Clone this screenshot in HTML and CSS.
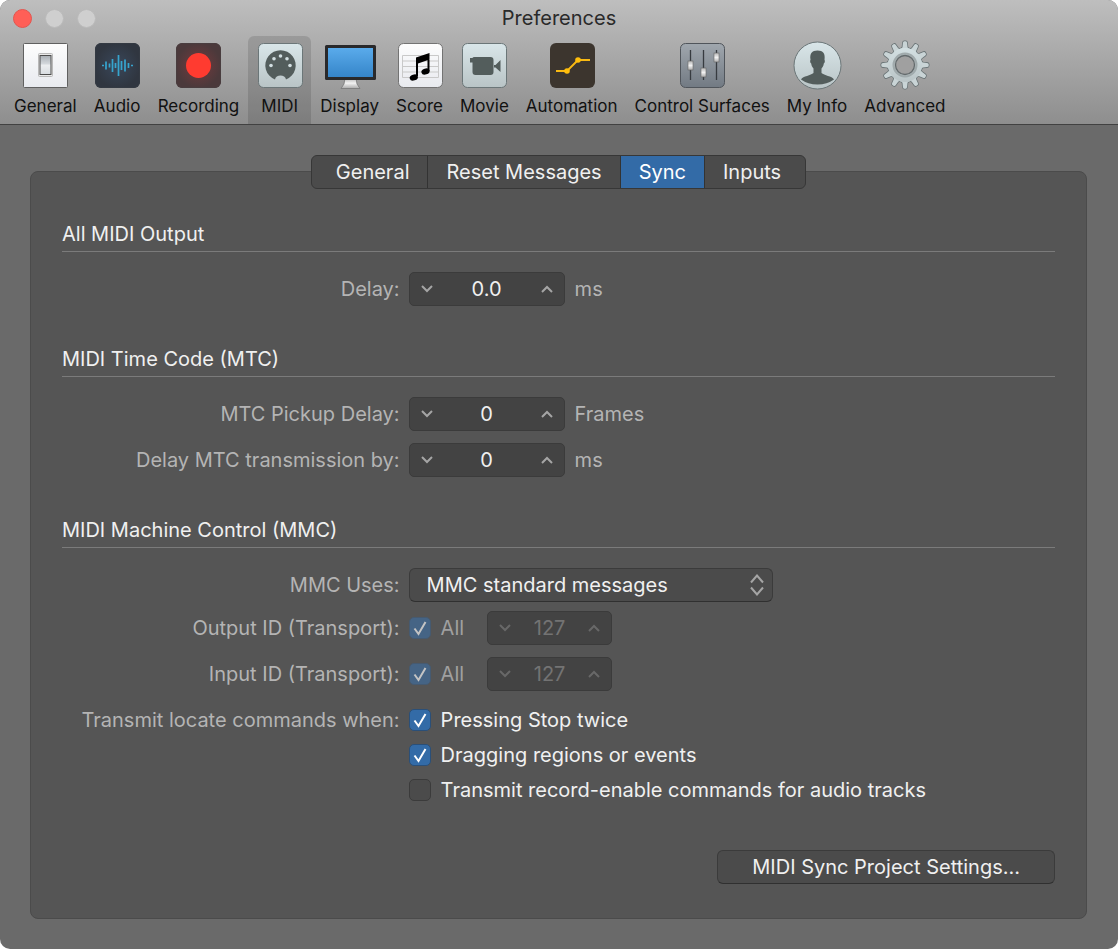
FILE: index.html
```html
<!DOCTYPE html>
<html lang="en">
<head>
<meta charset="utf-8">
<meta name="viewport" content="width=device-width, initial-scale=1">
<title>Preferences</title>
<link rel="stylesheet" href="styles.css">
</head>
<body>
<div class="window">

<header class="top">
  <div class="titlebar">
    <div class="lights">
      <button class="light close" aria-label="Close"></button>
      <button class="light" aria-label="Minimize"></button>
      <button class="light" aria-label="Zoom"></button>
    </div>
    <h1>Preferences</h1>
  </div>

  <nav class="toolbar">
    <button class="tool">
      <svg width="50" height="50" viewBox="0 0 50 50">
        <defs>
          <linearGradient id="white" x1="0" y1="0" x2="0" y2="1"><stop offset="0" stop-color="#fdfdfd"/><stop offset="1" stop-color="#e8eaef"/></linearGradient>
          <linearGradient id="pale" x1="0" y1="0" x2="0" y2="1"><stop offset="0" stop-color="#d9e6e9"/><stop offset="1" stop-color="#b9c4c6"/></linearGradient>
          <linearGradient id="gearfill" gradientUnits="userSpaceOnUse" x1="0" y1="0" x2="0" y2="50"><stop offset="0" stop-color="#d9e6e9"/><stop offset="1" stop-color="#b4bec0"/></linearGradient>
          <linearGradient id="sky" x1="0" y1="0" x2="0" y2="1"><stop offset="0" stop-color="#5aabeb"/><stop offset="1" stop-color="#3585c9"/></linearGradient>
          <linearGradient id="slate" x1="0" y1="0" x2="0" y2="1"><stop offset="0" stop-color="#a0a7ae"/><stop offset="1" stop-color="#727a83"/></linearGradient>
          <linearGradient id="metal" x1="0" y1="0" x2="0" y2="1"><stop offset="0" stop-color="#b5b5b5"/><stop offset=".5" stop-color="#f2f2f2"/><stop offset="1" stop-color="#aaa"/></linearGradient>
          <linearGradient id="rocker" x1="0" y1="0" x2="0" y2="1"><stop offset="0" stop-color="#a9afb5"/><stop offset=".45" stop-color="#d5d9dd"/><stop offset=".5" stop-color="#eceef0"/><stop offset="1" stop-color="#d8dce0"/></linearGradient>
          <radialGradient id="navy"><stop offset="0" stop-color="#39475a"/><stop offset="1" stop-color="#303640"/></radialGradient>
          <radialGradient id="maroon"><stop offset="0" stop-color="#743a3d"/><stop offset="1" stop-color="#4b393b"/></radialGradient>
        </defs>
        <rect x="3.500" y="3.500" width="44" height="44" rx="1" fill="url(#white)" stroke="#606060"/>
        <rect x="18.500" y="13.500" width="14" height="23" rx="1" fill="#e9e9e9" stroke="#b9b9b9"/>
        <rect x="20" y="15.500" width="11" height="19" fill="url(#rocker)" stroke="#4c4c4c"/>
      </svg>
      <span>General</span>
    </button>
    <button class="tool">
      <svg width="50" height="50" viewBox="0 0 50 50">
        <rect x="3" y="3" width="45" height="45" rx="6" fill="url(#navy)"/>
        <rect x="3.500" y="3.500" width="44" height="44" rx="6" fill="none" stroke="#343a43"/>
        <path d="M10 25.500h2M39 25.500h2M14 21.500v8M17.500 23.500v4M20.500 19v13M23.500 23v5M26.500 15v21M29.500 21v9M33 19.500v12M36.500 23v5" fill="none" stroke="#36a5cf" stroke-width="1.700"/>
      </svg>
      <span>Audio</span>
    </button>
    <button class="tool">
      <svg width="50" height="50" viewBox="0 0 50 50">
        <rect x="3" y="3" width="45" height="45" rx="6" fill="url(#maroon)"/>
        <rect x="3.500" y="3.500" width="44" height="44" rx="6" fill="none" stroke="#493d3f"/>
        <circle cx="25.500" cy="25.500" r="12.500" fill="#ff3b30"/>
      </svg>
      <span>Recording</span>
    </button>
    <button class="tool selected">
      <svg width="50" height="50" viewBox="0 0 50 50">
        <rect x="3.500" y="3.500" width="44" height="44" rx="5" fill="url(#pale)" stroke="#6b7678"/>
        <path d="M20 39.500A15.200 15.200 0 1 1 31 39.500C30.500 34 20.500 34 20 39.500z" fill="#535d5c"/>
        <g fill="#d3dfe2"><circle cx="16" cy="25.500" r="1.800"/><circle cx="19" cy="18.800" r="1.800"/><circle cx="25.500" cy="16" r="1.800"/><circle cx="32" cy="18.800" r="1.800"/><circle cx="35" cy="25.500" r="1.800"/></g>
      </svg>
      <span>MIDI</span>
    </button>
    <button class="tool">
      <svg width="54" height="50" viewBox="0 0 54 50">
        <path d="M22 38h11l1 6 3 4.500H18l3-4.500z" fill="url(#metal)" stroke="#777" stroke-width=".8"/>
        <rect x="2" y="5" width="51" height="35" rx="1.500" fill="#29292b"/>
        <rect x="5" y="8" width="45" height="29" fill="url(#sky)"/>
      </svg>
      <span>Display</span>
    </button>
    <button class="tool">
      <svg width="50" height="50" viewBox="0 0 50 50">
        <rect x="3.500" y="3.500" width="44" height="44" rx="5" fill="url(#white)" stroke="#737373"/>
        <path d="M7.500 15.500h36M7.500 21h36M7.500 26.500h36M7.500 32h36M7.500 37.500h36M7.500 15.500v22M43.500 15.500v22" fill="none" stroke="#c9c9c9"/>
        <path d="M21 17.500L34.500 13v6.500L23 23.500V36h-2zM32.500 15h2v16h-2z"/>
        <ellipse cx="18.800" cy="37.500" rx="4.200" ry="3" transform="rotate(-18 18.800 37.500)"/>
        <ellipse cx="30.500" cy="31.500" rx="4.200" ry="3" transform="rotate(-18 30.500 31.500)"/>
      </svg>
      <span>Score</span>
    </button>
    <button class="tool">
      <svg width="50" height="50" viewBox="0 0 50 50">
        <rect x="3.500" y="3.500" width="44" height="44" rx="5" fill="url(#pale)" stroke="#6b7678"/>
        <path d="M11 18h2.500q0-1 2-1h16q3 0 3 3v12q0 3-3 3h-15q-3 0-3-3V22.500H11zM35 25h1.500l5-5v12l-5-4.500H35z" fill="#535d5c"/>
      </svg>
      <span>Movie</span>
    </button>
    <button class="tool">
      <svg width="50" height="50" viewBox="0 0 50 50">
        <rect x="3" y="3" width="45" height="45" rx="6" fill="#3c352e"/>
        <path d="M9 31h11L31 20h12" fill="none" stroke="#f8b913" stroke-width="1.800"/>
        <circle cx="20" cy="31" r="2.800" fill="#ffbe0b"/><circle cx="31" cy="20" r="2.800" fill="#ffbe0b"/>
      </svg>
      <span>Automation</span>
    </button>
    <button class="tool">
      <svg width="50" height="50" viewBox="0 0 50 50">
        <rect x="3.500" y="3.500" width="44" height="44" rx="5" fill="url(#slate)" stroke="#50555b"/>
        <path d="M13.500 10v30M26.500 10v30M39.500 10v30" fill="none" stroke="#373b40" stroke-width="1.300"/>
        <g fill="url(#metal)" stroke="#666" stroke-width=".6"><rect x="11" y="21" width="5" height="9"/><rect x="24" y="28" width="5" height="9"/><rect x="37" y="13" width="5" height="9"/></g>
      </svg>
      <span>Control Surfaces</span>
    </button>
    <button class="tool">
      <svg width="50" height="50" viewBox="0 0 50 50">
        <circle cx="25.500" cy="25.500" r="23.500" fill="url(#pale)" stroke="#6b7678"/>
        <path d="M9 39.500c2-3.500 10-4 12.500-6.500v-4.500c-1.500-1.500-2-3-2.300-5-1.300-.5-1.200-3-.7-3.800C17.500 13.500 20 10.500 25.500 10.500s8 3 7 9.200c.5.800.6 3.300-.7 3.800-.3 2-.8 3.500-2.300 5V33c2.500 2.500 10.500 3 12.500 6.500Q35 44.500 25.500 44.500T9 39.500z" fill="#535d5c"/>
      </svg>
      <span>My Info</span>
    </button>
    <button class="tool">
      <svg width="50" height="50" viewBox="0 0 50 50">
        <defs>
          <g id="gear">
            <path id="teeth" d="M21 10l1.500-3 .4-4q.2-1.700 1.300-1.700h1.600q1.100 0 1.300 1.700l.4 4L29 10zM21 40l1.500 3 .4 4q.2 1.700 1.300 1.700h1.600q1.100 0 1.300-1.700l.4-4L29 40z"/>
            <use href="#teeth" transform="rotate(30 25 25)"/>
            <use href="#teeth" transform="rotate(60 25 25)"/>
            <use href="#teeth" transform="rotate(90 25 25)"/>
            <use href="#teeth" transform="rotate(120 25 25)"/>
            <use href="#teeth" transform="rotate(150 25 25)"/>
            <circle cx="25" cy="25" r="17"/>
          </g>
        </defs>
        <use href="#gear" fill="#697375" stroke="#697375" stroke-width="1.600"/>
        <use href="#gear" fill="#c9d4d6"/>
        <circle cx="25" cy="25" r="17" fill="url(#gearfill)"/>
        <circle cx="25" cy="25" r="11.500" fill="#b4bec0" stroke="#a0aaac" stroke-width="2"/>
        <circle cx="25" cy="25" r="9.500" fill="#a0a0a0" stroke="#646b6d" stroke-width="1.300"/>
      </svg>
      <span>Advanced</span>
    </button>
  </nav>
</header>

<main>
  <div class="tabs">
    <button>General</button>
    <button>Reset Messages</button>
    <button class="active">Sync</button>
    <button>Inputs</button>
  </div>

  <form class="panel">
    <section>
      <h2>All MIDI Output</h2>
      <div class="row">
        <label class="name" for="delay">Delay:</label>
        <div class="stepper">
          <button type="button" aria-label="Decrease"><svg width="12" height="8" viewBox="0 0 12 8"><path d="M1 1l5 5 5-5"/></svg></button>
          <input type="text" id="delay" value="0.0">
          <button type="button" aria-label="Increase"><svg width="12" height="8" viewBox="0 0 12 8"><path d="M1 7l5-5 5 5"/></svg></button>
        </div>
        <span class="unit">ms</span>
      </div>
    </section>

    <section>
      <h2>MIDI Time Code (MTC)</h2>
      <div class="row">
        <label class="name" for="pickup">MTC Pickup Delay:</label>
        <div class="stepper">
          <button type="button" aria-label="Decrease"><svg width="12" height="8" viewBox="0 0 12 8"><path d="M1 1l5 5 5-5"/></svg></button>
          <input type="text" id="pickup" value="0">
          <button type="button" aria-label="Increase"><svg width="12" height="8" viewBox="0 0 12 8"><path d="M1 7l5-5 5 5"/></svg></button>
        </div>
        <span class="unit">Frames</span>
      </div>
      <div class="row">
        <label class="name" for="transmission">Delay MTC transmission by:</label>
        <div class="stepper">
          <button type="button" aria-label="Decrease"><svg width="12" height="8" viewBox="0 0 12 8"><path d="M1 1l5 5 5-5"/></svg></button>
          <input type="text" id="transmission" value="0">
          <button type="button" aria-label="Increase"><svg width="12" height="8" viewBox="0 0 12 8"><path d="M1 7l5-5 5 5"/></svg></button>
        </div>
        <span class="unit">ms</span>
      </div>
    </section>

    <section class="mmc">
      <h2>MIDI Machine Control (MMC)</h2>
      <div class="row">
        <label class="name" for="mmc">MMC Uses:</label>
        <div class="popup">
          <select id="mmc"><option>MMC standard messages</option></select>
          <svg width="14" height="22" viewBox="0 0 14 22"><path d="M1 8.500l6-7 6 7M1 13.500l6 7 6-7"/></svg>
        </div>
      </div>
      <div class="row">
        <label class="name" for="outid">Output ID (Transport):</label>
        <label class="check off"><input type="checkbox" checked disabled><svg width="14" height="16" viewBox="0 0 14 16"><path d="M1.500 8.500l4 5.500 7-12"/></svg>All</label>
        <div class="stepper small">
          <button type="button" disabled aria-label="Decrease"><svg width="12" height="8" viewBox="0 0 12 8"><path d="M1 1l5 5 5-5"/></svg></button>
          <input type="text" id="outid" value="127" disabled>
          <button type="button" disabled aria-label="Increase"><svg width="12" height="8" viewBox="0 0 12 8"><path d="M1 7l5-5 5 5"/></svg></button>
        </div>
      </div>
      <div class="row">
        <label class="name" for="inid">Input ID (Transport):</label>
        <label class="check off"><input type="checkbox" checked disabled><svg width="14" height="16" viewBox="0 0 14 16"><path d="M1.500 8.500l4 5.500 7-12"/></svg>All</label>
        <div class="stepper small">
          <button type="button" disabled aria-label="Decrease"><svg width="12" height="8" viewBox="0 0 12 8"><path d="M1 1l5 5 5-5"/></svg></button>
          <input type="text" id="inid" value="127" disabled>
          <button type="button" disabled aria-label="Increase"><svg width="12" height="8" viewBox="0 0 12 8"><path d="M1 7l5-5 5 5"/></svg></button>
        </div>
      </div>
      <div class="row top-row">
        <span class="name">Transmit locate commands when:</span>
        <div class="checks">
          <label class="check"><input type="checkbox" checked><svg width="14" height="16" viewBox="0 0 14 16"><path d="M1.500 8.500l4 5.500 7-12"/></svg>Pressing Stop twice</label>
          <label class="check"><input type="checkbox" checked><svg width="14" height="16" viewBox="0 0 14 16"><path d="M1.500 8.500l4 5.500 7-12"/></svg>Dragging regions or events</label>
          <label class="check"><input type="checkbox"><svg width="14" height="16" viewBox="0 0 14 16"><path d="M1.500 8.500l4 5.500 7-12"/></svg>Transmit record-enable commands for audio tracks</label>
        </div>
      </div>
    </section>

    <div class="footer">
      <button type="button" class="push">MIDI Sync Project Settings…</button>
    </div>
  </form>
</main>

</div>
</body>
</html>
```
FILE: styles.css
```css
* {
  box-sizing: border-box;
}

body {
  margin: 0;
  padding: 0 2px 2px 0;
  background: #fff;
  font-family: Inter, "Liberation Sans", sans-serif;
  font-size: 20px;
  line-height: 24px;
  color: #f0f0f0;
}

button, input, select {
  font: inherit;
  color: inherit;
  margin: 0;
  padding: 0;
  border: 0;
  background: none;
}

.window {
  background: #6a6a6a;
  border-radius: 10px;
  overflow: hidden;
}

/* title bar and toolbar */

.top {
  background: linear-gradient(#bebebe, #8e8e8e);
  border-bottom: 1px solid #414141;
  color: #111;
}

.titlebar {
  display: grid;
  grid-template-columns: 1fr auto 1fr;
  align-items: center;
  height: 36px;
  padding: 0 13px;
}

.lights {
  display: flex;
  gap: 13px;
}

.light {
  width: 19px;
  height: 19px;
  border-radius: 50%;
  background: #cfcfcf;
  border: 1px solid #bababa;
}

.light.close {
  background: #ff5f57;
  border-color: #e2554f;
}

h1 {
  margin: 0;
  font-size: 20px;
  font-weight: 400;
  color: #2a2a2a;
}

.toolbar {
  display: flex;
  gap: 1px;
  padding-left: 6px;
}

.tool {
  display: flex;
  flex-direction: column;
  align-items: center;
  min-width: 63px;
  height: 88px;
  padding: 4px 8px 0;
  border-radius: 6px 6px 0 0;
  font-size: 17px;
  line-height: 20px;
  white-space: nowrap;
}

.tool svg {
  margin: 0 -3px 6px;
}

.tool.selected {
  background: rgba(0, 0, 0, .12);
}

/* tabs */

main {
  padding: 30px 31px 30px 30px;
}

.tabs {
  position: relative;
  display: flex;
  width: max-content;
  margin: 0 auto -18px;
  border: 1px solid #373737;
  border-radius: 6px;
  overflow: hidden;
  background: #4b4b4b;
}

.tabs button {
  height: 32px;
  padding: 0 18px;
  border-left: 1px solid #333;
}

.tabs button:first-child {
  border-left: 0;
  padding-left: 24px;
}

.tabs button:last-child {
  padding-right: 24px;
}

.tabs .active {
  background: #336ba7;
  color: #fff;
}

.panel {
  padding: 50px 31px 34px;
  background: #555;
  border: 1px solid #4b4b4b;
  border-radius: 8px;
}

section {
  margin-bottom: 40px;
}

h2 {
  margin: 0 0 20px;
  padding-bottom: 5px;
  border-bottom: 1px solid #7b7b7b;
  font-size: 20px;
  font-weight: 400;
}

.row {
  display: flex;
  align-items: center;
  margin-bottom: 12px;
}

.row.top-row {
  align-items: flex-start;
  padding-top: 5px;
}

section + section {
  margin-top: 41px;
}

.mmc {
  margin-bottom: 48px;
}

.mmc h2 + .row {
  margin-bottom: 9px;
}

.name {
  width: 34%;
  margin-right: 9px;
  text-align: right;
  color: #b4b4b4;
}

.unit {
  margin-left: 10px;
  color: #b4b4b4;
}

/* controls */

.stepper {
  display: flex;
  width: 156px;
  height: 34px;
  background: #434343;
  border: 1px solid #3b3b3b;
  border-radius: 5px;
}

.stepper input {
  flex: 1;
  min-width: 0;
  text-align: center;
}

.stepper button {
  width: 34px;
}

.stepper svg {
  display: block;
  margin: 0 auto;
}

.stepper svg, .popup svg, .check svg {
  fill: none;
  stroke: #a5a5a5;
  stroke-width: 2;
}

.stepper.small {
  width: 125px;
  margin-left: 23px;
  color: #737373;
}

.stepper.small svg {
  stroke: #686868;
}

.popup {
  position: relative;
  width: 364px;
}

.popup select {
  display: block;
  appearance: none;
  width: 100%;
  height: 34px;
  padding: 0 17px;
  background: #4b4b4b;
  border: 1px solid #3b3b3b;
  border-bottom-color: #303030;
  border-radius: 6px;
}

.popup svg {
  position: absolute;
  right: 9px;
  top: 6px;
  pointer-events: none;
}

.check {
  position: relative;
  display: flex;
  align-items: center;
  gap: 10px;
}

.check input {
  appearance: none;
  width: 22px;
  height: 22px;
  background: #4b4b4b;
  border: 1px solid #3b3b3b;
  border-radius: 5px;
}

.check input:checked {
  background: #336ba7;
  border-color: #2a4f78;
}

/* the tick lies over the box */
.check svg {
  display: none;
  position: absolute;
  left: 4px;
  top: 4px;
  stroke: #fff;
}

.check input:checked + svg {
  display: block;
}

.check.off {
  color: #a0a0a0;
}

.check.off input {
  background: #456485;
  border-color: #465a70;
}

.check.off svg {
  stroke: #c4c4c4;
}

.checks {
  display: grid;
  gap: 11px;
}

.footer {
  display: flex;
  justify-content: flex-end;
}

.push {
  height: 34px;
  padding: 0 34px;
  background: #4b4b4b;
  border: 1px solid #3b3b3b;
  border-bottom-color: #303030;
  border-radius: 6px;
}
```
